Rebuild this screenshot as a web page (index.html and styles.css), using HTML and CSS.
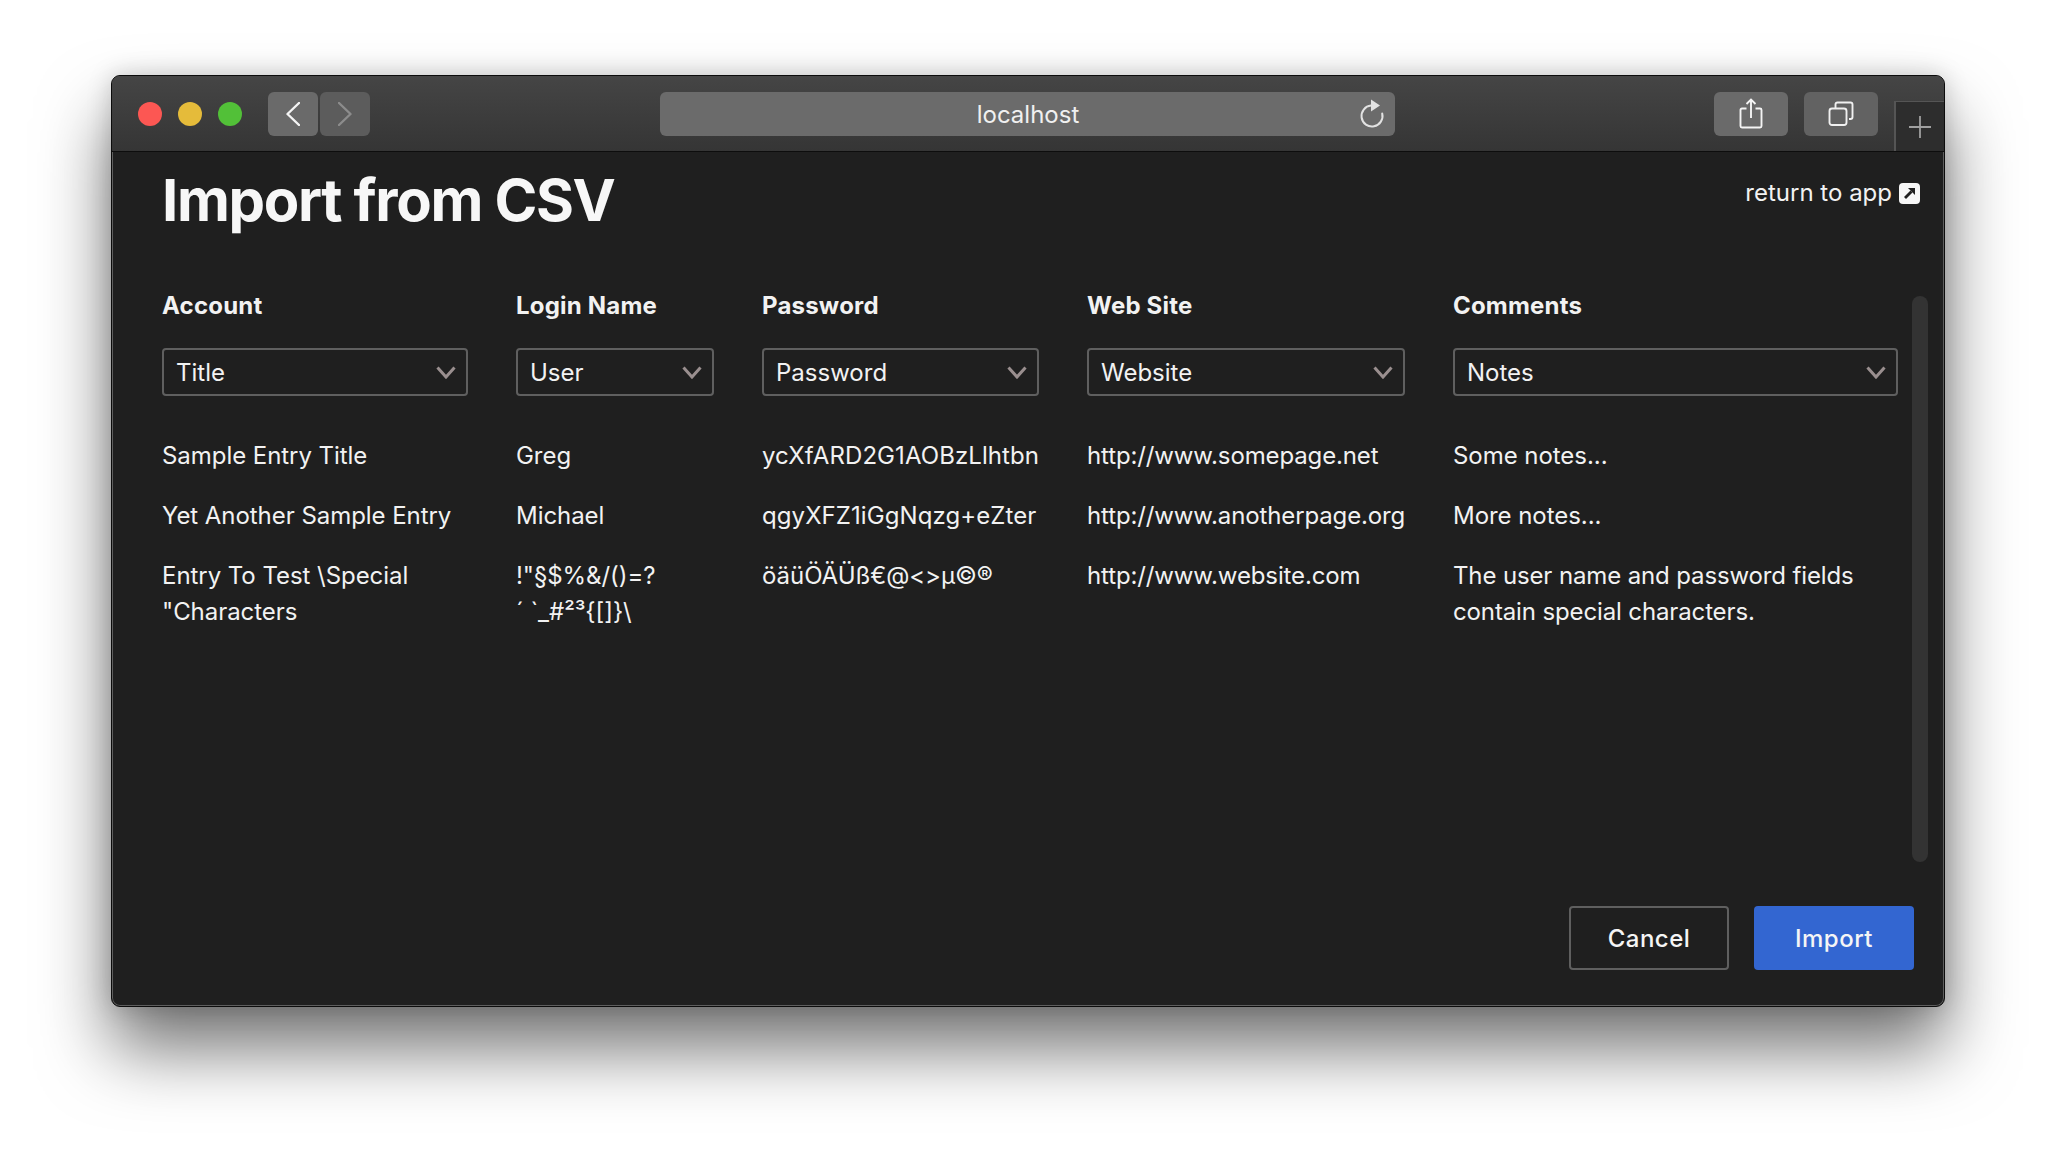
FILE: index.html
```html
<!DOCTYPE html>
<html>
<head>
  <meta charset="utf-8">
  <title>Import from CSV</title>
  <link rel="stylesheet" href="styles.css">
</head>
<body>
  <div class="window">
    <div class="toolbar">
      <div class="lights">
        <span class="light red"></span>
        <span class="light yellow"></span>
        <span class="light green"></span>
      </div>
      <div class="nav">
        <button class="tool-btn nav-btn">
          <svg width="14" height="24" viewBox="0 0 14 24"><path d="M13 1 L1.5 12 L13 23" fill="none" stroke="#f4f4f4" stroke-width="2.4" stroke-linecap="round" stroke-linejoin="round"/></svg>
        </button>
        <button class="tool-btn nav-btn disabled">
          <svg width="14" height="24" viewBox="0 0 14 24"><path d="M1 1 L12.5 12 L1 23" fill="none" stroke="#8c8c8c" stroke-width="2.4" stroke-linecap="round" stroke-linejoin="round"/></svg>
        </button>
      </div>
      <div class="address">
        <span class="address-text">localhost</span>
        <svg class="reload" width="26" height="30" viewBox="0 0 26 30">
          <path d="M12 6.55 A10.5 10.5 0 1 0 23.2 14.5" fill="none" stroke="#e2e2e2" stroke-width="2" stroke-linecap="round"/>
          <path d="M12 0.5 L21 6.5 L12 12.5 Z" fill="#e2e2e2"/>
        </svg>
      </div>
      <button class="tool-btn action-btn">
        <svg width="24" height="32" viewBox="0 0 24 32">
          <path d="M7.5 10.5 H3 Q1.5 10.5 1.5 12 V28 Q1.5 29.5 3 29.5 H21 Q22.5 29.5 22.5 28 V12 Q22.5 10.5 21 10.5 H16.5" fill="none" stroke="#f4f4f4" stroke-width="1.9"/>
          <path d="M12 20 V1.5 M7.5 6 L12 1.5 L16.5 6" fill="none" stroke="#f4f4f4" stroke-width="1.9"/>
        </svg>
      </button>
      <button class="tool-btn action-btn second">
        <svg width="26" height="26" viewBox="0 0 26 26">
          <rect x="1.5" y="7.5" width="17" height="16.5" rx="2.5" fill="none" stroke="#f0f0f0" stroke-width="1.9"/>
          <path d="M7.5 7.5 V3.5 Q7.5 1.5 9.5 1.5 H22.5 Q24.5 1.5 24.5 3.5 V16 Q24.5 18 22.5 18 H21" fill="none" stroke="#f0f0f0" stroke-width="1.9"/>
        </svg>
      </button>
      <div class="new-tab">
        <svg width="22" height="22" viewBox="0 0 22 22"><path d="M11 0 V22 M0 11 H22" stroke="#a0a0a0" stroke-width="1.8"/></svg>
      </div>
    </div>

    <div class="content">
      <div class="page-head">
        <h1>Import from CSV</h1>
        <a class="return-link" href="#">return to app
          <svg width="21" height="21" viewBox="0 0 21 21">
            <rect width="21" height="21" rx="4" fill="#f6f6f6"/>
            <path d="M6 15 L12.5 8.5" stroke="#1f1f1f" stroke-width="2.8"/>
            <path d="M9 5 H16 V12 Z" fill="#1f1f1f"/>
          </svg>
        </a>
      </div>

      <div class="csv-table">
        <div class="col-head">Account</div>
        <div class="col-head">Login Name</div>
        <div class="col-head">Password</div>
        <div class="col-head">Web Site</div>
        <div class="col-head">Comments</div>

        <div class="select-wrap">
          <select><option>Title</option></select>
          <svg class="chevron" width="20" height="13" viewBox="0 0 20 13"><path d="M1.5 1.5 L10 11 L18.5 1.5" fill="none" stroke="#9a8f8f" stroke-width="3"/></svg>
        </div>
        <div class="select-wrap">
          <select><option>User</option></select>
          <svg class="chevron" width="20" height="13" viewBox="0 0 20 13"><path d="M1.5 1.5 L10 11 L18.5 1.5" fill="none" stroke="#9a8f8f" stroke-width="3"/></svg>
        </div>
        <div class="select-wrap">
          <select><option>Password</option></select>
          <svg class="chevron" width="20" height="13" viewBox="0 0 20 13"><path d="M1.5 1.5 L10 11 L18.5 1.5" fill="none" stroke="#9a8f8f" stroke-width="3"/></svg>
        </div>
        <div class="select-wrap">
          <select><option>Website</option></select>
          <svg class="chevron" width="20" height="13" viewBox="0 0 20 13"><path d="M1.5 1.5 L10 11 L18.5 1.5" fill="none" stroke="#9a8f8f" stroke-width="3"/></svg>
        </div>
        <div class="select-wrap">
          <select><option>Notes</option></select>
          <svg class="chevron" width="20" height="13" viewBox="0 0 20 13"><path d="M1.5 1.5 L10 11 L18.5 1.5" fill="none" stroke="#9a8f8f" stroke-width="3"/></svg>
        </div>

        <div class="cell first-row">Sample Entry Title</div>
        <div class="cell first-row">Greg</div>
        <div class="cell first-row pw">ycXfARD2G1AOBzLlhtbn</div>
        <div class="cell first-row url">http://www.somepage.net</div>
        <div class="cell first-row">Some notes...</div>

        <div class="cell">Yet Another Sample Entry</div>
        <div class="cell">Michael</div>
        <div class="cell pw">qgyXFZ1iGgNqzg+eZter</div>
        <div class="cell url">http://www.anotherpage.org</div>
        <div class="cell">More notes...</div>

        <div class="cell">Entry To Test \Special "Characters</div>
        <div class="cell">!"§$%&amp;/()=?<br>´ `_#²³{[]}\</div>
        <div class="cell">öäüÖÄÜß€@&lt;&gt;µ©®</div>
        <div class="cell url">http://www.website.com</div>
        <div class="cell url">The user name and password fields contain special characters.</div>
      </div>

      <div class="scrollbar"></div>

      <div class="actions">
        <button class="btn btn-cancel">Cancel</button>
        <button class="btn btn-import">Import</button>
      </div>
    </div>
  </div>
</body>
</html>
```

FILE: styles.css
```css
html, body {
  margin: 0;
  height: 100%;
}

body {
  background-color: #fff;
  font-family: Inter, "Liberation Sans", sans-serif;
  color: #f2f2f2;
  overflow: hidden;
  padding: 75px 111px 0;
  box-sizing: border-box;
}

.window {
  width: 1834px;
  height: 932px;
  box-sizing: border-box;
  display: flex;
  flex-direction: column;
  border: 1px solid #0c0c0c;
  border-radius: 9px;
  background-color: #1f1f1f;
  box-shadow: inset 0 0 0 1px #5e5e5e, 0 42px 70px rgba(0, 0, 0, 0.55), 0 0 24px rgba(0, 0, 0, 0.18);
  overflow: hidden;
}

/* Barra del navegador */
.toolbar {
  height: 59px;
  flex-shrink: 0;
  display: flex;
  align-items: flex-start;
  background: linear-gradient(#454545, #353535);
  border-bottom: 1px solid #0d0d0d;
  padding: 16px 0 0 26px;
}

.lights {
  display: flex;
  gap: 16px;
  margin-top: 10px;
}

.light {
  width: 24px;
  height: 24px;
  border-radius: 50%;
}

.red { background-color: #fc5753; }
.yellow { background-color: #e5bb3a; }
.green { background-color: #52c038; }

.nav {
  display: flex;
  gap: 2px;
  margin-left: 26px;
}

.tool-btn {
  display: flex;
  align-items: center;
  justify-content: center;
  height: 44px;
  border: none;
  border-radius: 6px;
  padding: 0;
  background-color: #6a6a6a;
}

.nav-btn {
  width: 50px;
}

.nav-btn.disabled {
  background-color: #5c5c5c;
}

.address {
  position: relative;
  width: 735px;
  height: 44px;
  margin-left: 290px;
  display: flex;
  align-items: center;
  justify-content: center;
  border-radius: 6px;
  background-color: #6b6b6b;
}

.address-text {
  font-size: 24px;
  color: #f0f0f0;
  margin-left: 1px;
}

.reload {
  position: absolute;
  right: 10px;
  top: 7px;
}

.action-btn {
  width: 74px;
  margin-left: 319px;
}

.action-btn.second {
  margin-left: 16px;
  background-color: #626262;
}

.new-tab {
  width: 50px;
  height: 50px;
  margin: 9px 0 0 16px;
  display: flex;
  align-items: center;
  justify-content: center;
  box-sizing: border-box;
  border-left: 2px solid #555;
  border-top: 1px solid #555;
  background-color: #2d2d2d;
}

.content {
  position: relative;
  flex: 1;
  display: flex;
  flex-direction: column;
  padding: 0 30px 0 50px;
}

.page-head {
  display: flex;
  justify-content: space-between;
  align-items: flex-start;
  margin-right: -6px;
}

h1 {
  margin: 13px 0 0;
  font-size: 58px;
  line-height: 70px;
  font-weight: 700;
  letter-spacing: -1.35px;
  color: #f7f7f7;
}

.return-link {
  display: flex;
  align-items: center;
  gap: 7px;
  margin-top: 23px;
  font-size: 24px;
  line-height: 36px;
  color: #f2f2f2;
  text-decoration: none;
}

.csv-table {
  display: grid;
  grid-template-columns: 306px 198px 277px 318px 445px;
  column-gap: 48px;
  margin-top: 53px;
  font-size: 24px;
  line-height: 36px;
  letter-spacing: -0.05px;
}

.col-head {
  font-weight: 700;
  letter-spacing: 0.2px;
}

.select-wrap {
  position: relative;
  margin-top: 24px;
}

select {
  display: block;
  width: 100%;
  height: 48px;
  box-sizing: border-box;
  appearance: none;
  padding: 0 12px;
  border: 2px solid #5f5f5f;
  border-radius: 4px;
  background-color: #1f1f1f;
  color: #f2f2f2;
  font-family: inherit;
  font-size: 24px;
}

.chevron {
  position: absolute;
  right: 12px;
  top: 18px;
  pointer-events: none;
}

.cell {
  padding: 12px 0;
}

.cell.first-row {
  margin-top: 30px;
}

.cell.pw {
  letter-spacing: 0.08px;
}

.cell.url {
  letter-spacing: -0.13px;
}

.scrollbar {
  position: absolute;
  right: 16px;
  top: 144px;
  width: 16px;
  height: 566px;
  border-radius: 8px;
  background-color: #333;
}

.actions {
  margin-top: auto;
  display: flex;
  justify-content: flex-end;
  gap: 25px;
  padding-bottom: 36px;
}

.btn {
  width: 160px;
  height: 64px;
  box-sizing: border-box;
  border-radius: 4px;
  font-family: inherit;
  font-size: 24px;
  font-weight: 500;
  letter-spacing: 0.5px;
  color: #f5f5f5;
}

.btn-cancel {
  border: 2px solid #5f5f5f;
  background-color: #1f1f1f;
}

.btn-import {
  border: none;
  background-color: #3366d1;
}
```
